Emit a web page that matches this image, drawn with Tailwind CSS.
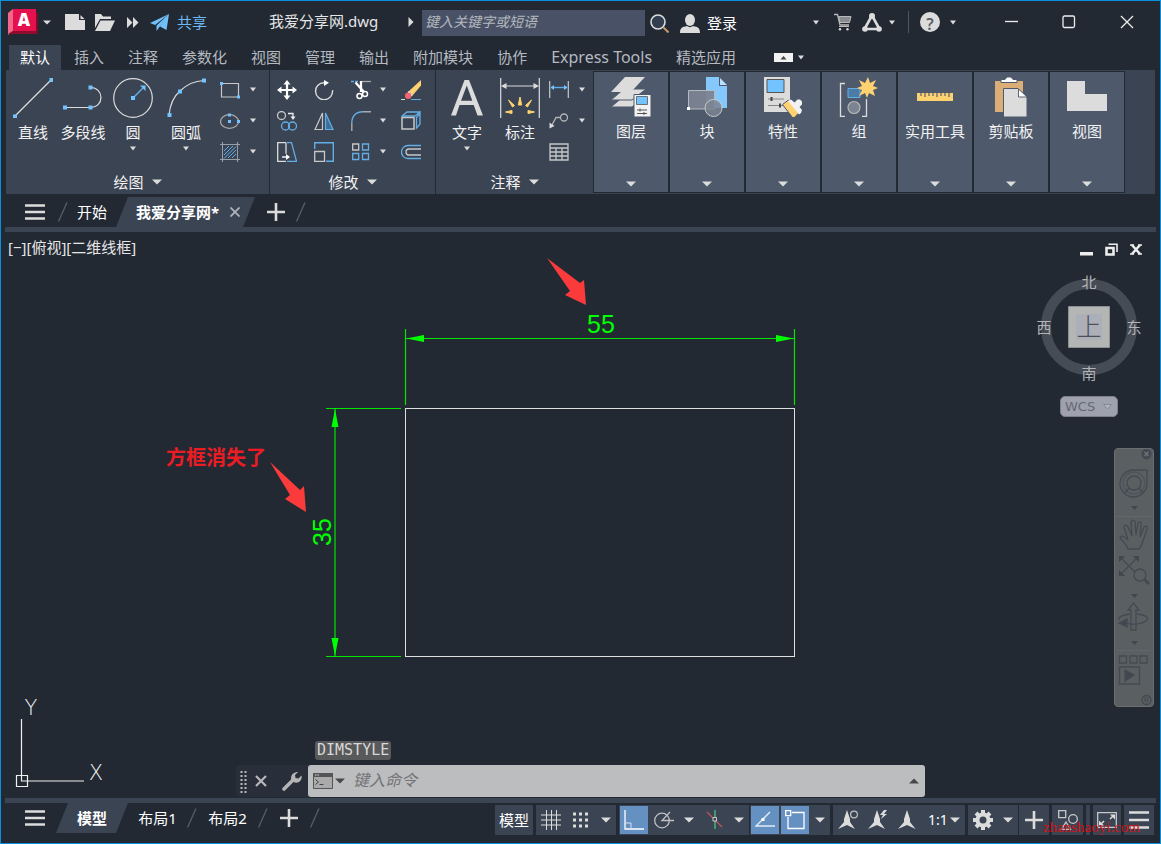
<!DOCTYPE html>
<html lang="zh-CN">
<head>
<meta charset="utf-8">
<meta name="viewport" content="width=device-width, initial-scale=1">
<title>我爱分享网.dwg</title>
<script src="https://cdn.jsdelivr.net/npm/@tailwindcss/browser@4"></script>
</head>
<body class="bg-[#222933]">
<svg class="hidden" aria-hidden="true">
  <symbol id="caret" viewBox="0 0 8 5"><path d="M1 .5h6L4 4.5z" fill="#dcdcdc"/></symbol>
  <symbol id="caret-lg" viewBox="0 0 10 6"><path d="M0 .5h10L5 5.5z" fill="#dcdcdc"/></symbol>
  <symbol id="menu" viewBox="0 0 20 16"><path d="M0 1.5h20M0 8h20M0 14.5h20" stroke="#dcdcdc" stroke-width="2.4"/></symbol>
  <symbol id="plus" viewBox="0 0 18 18"><path d="M9 0v18M0 9h18" stroke="#dcdcdc" stroke-width="2.6"/></symbol>
  <symbol id="slash" viewBox="0 0 10 20"><path d="M.5 19.500L9 .5" stroke="#525c6b" stroke-width="1.400"/></symbol>
</svg>
<div class="flex min-h-screen flex-col overflow-hidden border border-[#0a8fdd] bg-[#222933] text-[15px] leading-5 text-[#e6e6e6]" style="font-family:'Noto Sans','Noto Sans CJK SC',sans-serif">

  <header class="flex h-11 shrink-0 items-center pb-0.5">
    <div class="flex w-[268px] shrink-0 items-center pl-[7px]">
      <button aria-label="应用程序菜单" class="flex items-center gap-[5px]">
        <svg width="30" height="28" viewBox="0 0 30 28"><path d="M0 5L5 1v22L0 27z" fill="#f2688b"/><path d="M5 1h23v22H5z" fill="#e5114e"/><path d="M28 4l2 2v20L28 23z" fill="#7d0a26"/><path d="M5 23h23l2 3H0z" fill="#8e0c2d"/><text x="16" y="18" text-anchor="middle" font-size="17" font-weight="800" fill="#fff" font-family="Open Sans, sans-serif">A</text></svg>
        <svg width="8" height="5"><use href="#caret-lg"/></svg>
      </button>
      <button aria-label="新建" class="ml-[14px]"><svg width="20" height="16" viewBox="0 0 20 16"><path d="M0 0h14v6h6v10H0z" fill="#dcdcdc"/><path d="M15.500 1v4h4z" fill="#dcdcdc"/></svg></button>
      <button aria-label="打开" class="ml-[10px]"><svg width="20" height="17" viewBox="0 0 20 17"><path d="M0 0h6l2 2.500h8V5H5L0 14z" fill="#dcdcdc"/><path d="M5.500 6.500H20L15 17H0z" fill="#dcdcdc"/></svg></button>
      <button aria-label="更多" class="ml-[12px]"><svg width="12" height="11" viewBox="0 0 12 11"><path d="M0 0l5.500 5.500L0 11zM6 0l5.500 5.500L6 11z" fill="#dcdcdc"/></svg></button>
      <button class="ml-[11px] flex items-center gap-2 text-[#6cb8f4]"><svg width="19" height="17" viewBox="0 0 19 17"><path d="M19 0L0 9l5 2zM19 0L6.500 11.500V17l3-4zM19 0L10 12.500l6.500 3.500z" fill="#72c0fb"/></svg>共享</button>
    </div>
    <h1 class="w-[139px] shrink-0 whitespace-nowrap pb-0.5">我爱分享网.dwg</h1>
    <svg width="6" height="10" viewBox="0 0 6 10" class="shrink-0"><path d="M.5 0L5.500 5l-5 5z" fill="#dcdcdc"/></svg>
    <input type="text" aria-label="搜索" placeholder="键入关键字或短语" class="ml-2 mt-0.5 h-[26px] w-[223px] shrink-0 bg-[#485165] px-[3px] pb-1 text-sm italic placeholder:text-[#b4b8bf] outline-none">
    <button aria-label="查找" class="ml-[5px] mt-0.5"><svg width="19" height="19" viewBox="0 0 19 19"><circle cx="8" cy="8" r="7" fill="#42536b" fill-opacity=".5" stroke="#dcdcdc" stroke-width="1.600"/><path d="M13.500 13.500l5 5" stroke="#c49a6c" stroke-width="2"/></svg></button>
    <button class="ml-[11px] mt-0.5 flex items-center gap-[7px] whitespace-nowrap text-white"><svg width="20" height="19" viewBox="0 0 20 19"><ellipse cx="10" cy="6" rx="5" ry="6" fill="#dcdcdc"/><path d="M0 19c0-5 2-6 7-7 2 1.500 4 1.500 6 0 5 1 7 2 7 7z" fill="#dcdcdc"/></svg>登录</button>
    <div class="ml-auto flex shrink-0 items-center">
      <button aria-label="登录选项"><svg width="8" height="5"><use href="#caret"/></svg></button>
      <button aria-label="购物车" class="ml-[14px]"><svg width="18" height="18" viewBox="0 0 18 18"><path d="M0 1.500h3.500L6 12h9" fill="none" stroke="#b9b9b9" stroke-width="1.300"/><path d="M4.500 3.500H17l-1.500 6H6z" fill="#898c91" stroke="#b9b9b9"/><path d="M5 13.500h10" stroke="#b9b9b9"/><circle cx="6" cy="16.300" r="1.200" fill="#dcdcdc"/><circle cx="13.500" cy="16.300" r="1.200" fill="#dcdcdc"/></svg></button>
      <button aria-label="Autodesk App" class="ml-[10px]"><svg width="20" height="19" viewBox="0 0 20 19"><path d="M10 2.500L2.500 16h15z" fill="none" stroke="#dcdcdc" stroke-width="2.600"/><circle cx="10" cy="3" r="3" fill="#dcdcdc"/><circle cx="3" cy="16" r="2.800" fill="#dcdcdc"/><circle cx="17" cy="16" r="2.800" fill="#dcdcdc"/></svg></button>
      <button aria-label="应用选项" class="ml-[6px]"><svg width="8" height="5"><use href="#caret"/></svg></button>
      <span class="ml-[12px] h-[22px] w-px bg-[#4a566b]"></span>
      <button aria-label="帮助" class="ml-[11px] size-5 rounded-full bg-[#dcdcdc] text-base font-semibold text-[#5a5f66]">?</button>
      <button aria-label="帮助选项" class="ml-[9px]"><svg width="8" height="5"><use href="#caret"/></svg></button>
      <button aria-label="最小化" class="ml-[48px]"><svg width="13" height="14"><path d="M0 6.500h13" stroke="#eee" stroke-width="1.300"/></svg></button>
      <button aria-label="最大化" class="ml-[44px]"><svg width="14" height="14"><rect x="1" y="1" width="11.500" height="11.500" rx="1.500" fill="none" stroke="#eee" stroke-width="1.300"/></svg></button>
      <button aria-label="关闭" class="ml-[44px] mr-[26px]"><svg width="14" height="14"><path d="M1 1l12 12M13 1L1 13" stroke="#eee" stroke-width="1.300"/></svg></button>
    </div>
  </header>

  <nav class="flex h-[25px] shrink-0 items-stretch gap-0.5 whitespace-nowrap pl-2 text-[#b5bac1]">
    <button class="bg-[#3b4453] px-[11px] pb-0.5 text-white">默认</button>
    <button class="px-[11px] pb-0.5">插入</button>
    <button class="px-[11px] pb-0.5">注释</button>
    <button class="px-[11px] pb-0.5">参数化</button>
    <button class="px-[11px] pb-0.5">视图</button>
    <button class="px-[11px] pb-0.5">管理</button>
    <button class="px-[11px] pb-0.5">输出</button>
    <button class="px-[11px] pb-0.5">附加模块</button>
    <button class="px-[11px] pb-0.5">协作</button>
    <button class="px-[11px] pb-0.5 text-base leading-5">Express Tools</button>
    <button class="px-[11px] pb-0.5">精选应用</button>
    <button aria-label="最小化功能区" class="ml-[25px]"><svg width="19" height="9" viewBox="0 0 19 9"><path d="M0 0h19v9H0z" fill="#f2f2f2"/><path d="M6.500 6.500h6L9.500 3z" fill="#444"/></svg></button>
    <button aria-label="功能区选项" class="ml-[2px]"><svg width="8" height="5"><use href="#caret"/></svg></button>
  </nav>

  <section aria-label="功能区" class="mx-[5px] flex h-[124px] shrink-0 bg-[#3b4453] text-[#f2f2f2]">
    <div class="flex w-[264px] shrink-0 flex-col justify-between border-r border-[#222933]">
      <div class="flex pt-2">
        <button class="flex w-[54px] flex-col items-center gap-1"><svg width="40" height="40"><path d="M1.500 38.500l37-37" stroke="#dcdcdc" stroke-width="1.200"/><path d="M0 36.500h4v4H0zM36.500 0h4v4h-4z" fill="#72c3ff"/></svg>直线</button>
        <button class="flex w-[46px] flex-col items-center gap-1 whitespace-nowrap"><svg width="40" height="40"><path d="M1 29.500h27a10 10 0 0 0 0-20" fill="none" stroke="#dcdcdc" stroke-width="1.200"/><path d="M0 27.500h4v4H0zM25.500 27.500h4v4h-4zM25.500 7.500h4v4h-4z" fill="#72c3ff"/></svg>多段线</button>
        <button class="flex w-[54px] flex-col items-center gap-1"><svg width="40" height="40"><circle cx="20" cy="20" r="19.300" fill="none" stroke="#dcdcdc" stroke-width="1.200"/><path d="M20 20l10-10" stroke="#64aee6" stroke-width="1.500"/><path d="M18 18h4v4h-4zM27 7.500h5.500V13z" fill="#72c3ff"/></svg>圆<svg width="8" height="5"><use href="#caret"/></svg></button>
        <button class="flex w-[52px] flex-col items-center gap-1"><svg width="40" height="40"><path d="M3 37C4 27 7 19 14 13 20 7 28 3 38 2.500" fill="none" stroke="#dcdcdc" stroke-width="1.200"/><path d="M1.500 35h4v4h-4zM12 11.500h4v4h-4zM36 .5h4v4h-4z" fill="#72c3ff"/></svg>圆弧<svg width="8" height="5"><use href="#caret"/></svg></button>
        <div class="ml-2 grid auto-rows-[31px] grid-cols-[20px_8px] items-center gap-x-[9px] self-start -mt-1">
          <button aria-label="矩形"><svg width="20" height="20"><path d="M1.500 3.500h17v13.500h-17z" fill="none" stroke="#c8c8c8" stroke-width="1.200"/><path d="M0 2h3v3H0zM17 15.500h3v3h-3z" fill="#72c3ff"/></svg></button>
          <button aria-label="矩形选项"><svg width="8" height="5"><use href="#caret"/></svg></button>
          <button aria-label="椭圆"><svg width="20" height="20"><ellipse cx="9.500" cy="10.500" rx="9" ry="6.800" fill="none" stroke="#aaa" stroke-width="1.200"/><path d="M8 9h3v3H8zM8 2.500h3v3H8zM17 9h3v3h-3z" fill="#72c3ff"/></svg></button>
          <button aria-label="椭圆选项"><svg width="8" height="5"><use href="#caret"/></svg></button>
          <button aria-label="图案填充"><svg width="20" height="20"><path d="M2.500 0v20M17.500 0v20M0 2.500h20M0 17.500h20" stroke="#999fa7"/><path d="M4 9l5-5M4 13l9-9M4 16.500L16 4.500M8 16l8-8M12 16l4-4" stroke="#64aee6"/></svg></button>
          <button aria-label="填充选项"><svg width="8" height="5"><use href="#caret"/></svg></button>
        </div>
      </div>
      <button class="flex items-center justify-center gap-2 pb-0.5">绘图<svg width="10" height="6"><use href="#caret-lg"/></svg></button>
    </div>

    <div class="flex w-[166px] shrink-0 flex-col justify-between border-r border-[#222933]">
      <div class="ml-[7px] mt-1 grid auto-rows-[31px] grid-cols-[37px_37px_28px_22px_20px] items-center justify-items-start">
        <button aria-label="移动"><svg width="20" height="20"><path d="M10 2v16M2 10h16" stroke="#fff" stroke-width="2.200"/><path d="M10 0l3.500 4.500h-7zM10 20l3.500-4.500h-7zM0 10l4.500-3.500v7zM20 10l-4.500-3.500v7z" fill="#fff"/></svg></button>
        <button aria-label="旋转"><svg width="20" height="20"><path d="M10 2.700a8.500 8.500 0 1 0 8.500 7.500" fill="none" stroke="#dcdcdc" stroke-width="1.400"/><path d="M10 0l5 2.800L10 6z" fill="#fff"/></svg></button>
        <button aria-label="修剪"><svg width="20" height="20"><path d="M0 1.500h7" stroke="#64aee6" stroke-width="1.300" stroke-dasharray="3 1"/><path d="M11 1.500h9" stroke="#aaa" stroke-width="1.300"/><path d="M4.500 2.500L13 12M10 1v11" stroke="#fff" stroke-width="2.300"/><circle cx="8.500" cy="16" r="2.500" fill="none" stroke="#fff" stroke-width="1.500"/><circle cx="14" cy="14" r="2.500" fill="none" stroke="#fff" stroke-width="1.500"/></svg></button>
        <button aria-label="修剪选项"><svg width="8" height="5"><use href="#caret"/></svg></button>
        <button aria-label="删除"><svg width="20" height="20"><path d="M0 19.500h4" stroke="#dcdcdc"/><path d="M10 19.500h10" stroke="#64aee6"/><path d="M8 11L20 0v5.500L12 15z" fill="#ffd271"/><path d="M6.500 12L8 11l4 4-1.500 1.500z" fill="#fff"/><circle cx="7.200" cy="15.700" r="3.200" fill="#f2666b"/></svg></button>

        <button aria-label="复制"><svg width="20" height="20"><g fill="none" stroke-width="1.300"><circle cx="4.500" cy="4.500" r="4" stroke="#c8c8c8"/><circle cx="8.500" cy="15" r="4" stroke="#64aee6"/><circle cx="15.500" cy="15" r="4" stroke="#64aee6"/><path d="M11 2.500h5V7" stroke="#eee"/></g><path d="M13.500 5.500h5L16 9z" fill="#eee"/></svg></button>
        <button aria-label="镜像"><svg width="20" height="20"><path d="M8.500 2v16.500H1z" fill="none" stroke="#c8c8c8" stroke-width="1.200"/><path d="M11.500 2v16.500H19z" fill="#3c6f9a" stroke="#64aee6" stroke-width="1.200"/></svg></button>
        <button aria-label="圆角"><svg width="20" height="20"><path d="M.8 20v-8M12 .8h8" stroke="#aaa" stroke-width="1.400"/><path d="M.8 12C.8 5 5 .8 12 .8" fill="none" stroke="#64aee6" stroke-width="1.400"/></svg></button>
        <button aria-label="圆角选项"><svg width="8" height="5"><use href="#caret"/></svg></button>
        <button aria-label="分解"><svg width="20" height="20"><path d="M1 6.500h12V18H1z" fill="none" stroke="#c8c8c8" stroke-width="1.500"/><path d="M1 5l5-4h13l-5 4zM15.500 17l3.500-4V2.500l-3.500 4z" fill="none" stroke="#64aee6" stroke-width="1.300"/></svg></button>

        <button aria-label="拉伸"><svg width="20" height="20"><path d="M9 .7H.7v18.600H9M9 .7v11" fill="none" stroke="#dcdcdc" stroke-width="1.300"/><path d="M10 .7h4.500l5 18.600H10" fill="none" stroke="#64aee6" stroke-width="1.300"/><path d="M5 15h5" stroke="#fff" stroke-width="1.400"/><path d="M9 12l4 3-4 3z" fill="#fff"/></svg></button>
        <button aria-label="缩放"><svg width="20" height="20"><path d="M.7 7V.7h18.600v18.600H12" fill="none" stroke="#64aee6" stroke-width="1.400"/><path d="M.7 9.500h9.800v9.800H.7z" fill="none" stroke="#c8c8c8" stroke-width="1.300"/></svg></button>
        <button aria-label="阵列"><svg width="20" height="20" fill="none" stroke-width="1.300"><path d="M1.700 2h6v6h-6z" stroke="#c8c8c8"/><path d="M11.500 2h6v6h-6zM1.700 11.500h6v6h-6zM11.500 11.500h6v6h-6z" stroke="#64aee6"/></svg></button>
        <button aria-label="阵列选项"><svg width="8" height="5"><use href="#caret"/></svg></button>
        <button aria-label="偏移"><svg width="20" height="20" fill="none" stroke-width="1.300"><path d="M20 3.500H7a6.500 6.500 0 0 0 0 13h13" stroke="#64aee6"/><path d="M20 7H8a3 3 0 0 0 0 6h12" stroke="#c8c8c8"/></svg></button>
      </div>
      <button class="flex items-center justify-center gap-2 pb-0.5">修改<svg width="10" height="6"><use href="#caret-lg"/></svg></button>
    </div>

    <div class="flex w-[157px] shrink-0 flex-col justify-between">
      <div class="flex pl-[5px] pt-2">
        <button class="flex w-[52px] flex-col items-center gap-1"><svg width="40" height="40"><path d="M4 37.500L17.500 2h4.500L36 37.500h-5.500L26.700 27H12.500L9 37.500zM14 22.700h11.300L19.800 7.500z" fill="#dcdcdc" fill-rule="evenodd"/></svg>文字<svg width="8" height="5"><use href="#caret"/></svg></button>
        <button class="flex w-[54px] flex-col items-center gap-1"><svg width="40" height="40"><path d="M.7 0v40M39.300 0v40M3 8h34" stroke="#dcdcdc" stroke-width="1.200"/><path d="M1 8l5.500-3v6zM39 8l-5.500-3v6z" fill="#dcdcdc"/><path d="M18.300 27L20 19l1.700 8zM12.500 29L8.500 22l6 5.500zM27.500 29l4-7-6 5.500zM12 35.500l-6.500-1.500 6.500-1.500zM28 35.500l6.500-1.500-6.500-1.500z" fill="#ffd271" stroke="#ffd271"/></svg>标注</button>
        <div class="ml-0.5 grid auto-rows-[31px] grid-cols-[20px_8px] items-center gap-x-[9px] self-start -mt-1">
          <button aria-label="线性标注"><svg width="20" height="20"><path d="M.7 1v17M19.300 1v17" stroke="#c8c8c8" stroke-width="1.200"/><path d="M2 7.500h16" stroke="#64aee6" stroke-width="1.400"/><path d="M1.500 7.500L5 5v5zM18.500 7.500L15 5v5z" fill="#72c3ff"/></svg></button>
          <button aria-label="标注选项"><svg width="8" height="5"><use href="#caret"/></svg></button>
          <button aria-label="引线"><svg width="20" height="20"><circle cx="15" cy="6.500" r="3.500" fill="none" stroke="#b5b5b5" stroke-width="1.300"/><path d="M11.500 6.500H7L3 14" fill="none" stroke="#b5b5b5" stroke-width="1.300"/><path d="M.5 17.500v-6l5 3.500z" fill="#dcdcdc"/></svg></button>
          <button aria-label="引线选项"><svg width="8" height="5"><use href="#caret"/></svg></button>
          <button aria-label="表格"><svg width="20" height="20"><path d="M1 2h18v16H1zM1 6h18M1 10h18M1 14h18M7 6v12M13 6v12" fill="none" stroke="#c8c8c8" stroke-width="1.300"/></svg></button>
        </div>
      </div>
      <button class="flex items-center justify-center gap-2 pb-0.5">注释<svg width="10" height="6"><use href="#caret-lg"/></svg></button>
    </div>

    <div class="flex shrink-0 py-px">
      <button class="flex w-[76px] flex-col items-center border border-[#222933] bg-[#4e5a6c] pt-[5px]"><svg width="40" height="40"><path d="M13 19h22L21 30H0z" fill="#dcdcdc" stroke="#4e5a6c"/><path d="M13 12h22L21 23H0z" fill="#dcdcdc" stroke="#4e5a6c"/><path d="M14 0h20L20 15H0z" fill="#dcdcdc"/><path d="M23 17.500h17V40H23z" fill="#f2f2f2" stroke="#4e5a6c"/><path d="M25.500 19.500h11v8h-11z" fill="#72c3ff" stroke="#555" stroke-width=".8"/><path d="M26 33h10M26 36.500h10M29 31.500v3M33 35v3" stroke="#555"/></svg><span class="mt-1">图层</span><svg width="10" height="6" class="mt-auto mb-[5px]"><use href="#caret-lg"/></svg></button>
      <button class="flex w-[76px] flex-col items-center border border-[#222933] bg-[#4e5a6c] pt-[5px]"><svg width="40" height="40"><path d="M19 0h13v9h8v22H19z" fill="#85c8fc"/><path d="M33 1l7 7h-7z" fill="#b9dffc"/><path d="M1.500 13.500h26V32h-26z" fill="#7b8492" fill-opacity=".95" stroke="#b5bac2"/><circle cx="26.500" cy="31" r="8.500" fill="#7b8492" fill-opacity=".85" stroke="#c8c8c8"/><path d="M0 30h3v3H0z" fill="#fff"/></svg><span class="mt-1">块</span><svg width="10" height="6" class="mt-auto mb-[5px]"><use href="#caret-lg"/></svg></button>
      <button class="flex w-[76px] flex-col items-center border border-[#222933] bg-[#4e5a6c] pt-[5px]"><svg width="40" height="40"><path d="M1 0h26v35H1z" fill="#dcdcdc"/><path d="M4 2.500h17v13H4z" fill="#72c3ff" stroke="#555"/><path d="M5 22h16M5 28.500h16" stroke="#888"/><path d="M8.500 20v4M17 26.500v4" stroke="#444" stroke-width="2"/><path d="M19.500 27.500l6-4.500 11 12-5 5.500h-2z" fill="#ffd271" stroke="#4e5a6c"/><path d="M25 24l3-1.500 3.500 3 3-3h2.500l2 2v3l-2.500 2.500 2.500 3-1 3-2 1.500z" fill="#f2f2f2"/></svg><span class="mt-1">特性</span><svg width="10" height="6" class="mt-auto mb-[5px]"><use href="#caret-lg"/></svg></button>
      <button class="flex w-[76px] flex-col items-center border border-[#222933] bg-[#4e5a6c] pt-[5px]"><svg width="40" height="40"><path d="M6 6.500H1.500v33H6M23 39.500h4.500V22" fill="none" stroke="#dcdcdc" stroke-width="1.300"/><path d="M9 11.500h12v9H9z" fill="#4c7ba5" stroke="#64aee6"/><circle cx="15" cy="30.500" r="6" fill="#7b8492" stroke="#b5b5b5" stroke-width="1.200"/><path d="M29 0l2 6 6-3-3 6 5 2-5 2 2 6-6-3-2 5-2-5-6 3 3-6-5-2 5-2-3-6 6 3z" fill="#ffd271"/></svg><span class="mt-1">组</span><svg width="10" height="6" class="mt-auto mb-[5px]"><use href="#caret-lg"/></svg></button>
      <button class="flex w-[76px] flex-col items-center border border-[#222933] bg-[#4e5a6c] pt-[5px]"><svg width="40" height="40"><path d="M2 16h36v8H2z" fill="#ffd271"/><path d="M6 16v3M10 16v4M14 16v3M18 16v3M22 16v4M26 16v3M30 16v3M34 16v4" stroke="#59606a" stroke-width="1.200"/></svg><span class="mt-1 whitespace-nowrap">实用工具</span><svg width="10" height="6" class="mt-auto mb-[5px]"><use href="#caret-lg"/></svg></button>
      <button class="flex w-[76px] flex-col items-center border border-[#222933] bg-[#4e5a6c] pt-[5px]"><svg width="40" height="40"><path d="M4 4h28v31H4z" fill="#dbae78"/><path d="M10 5.500h16V2.500h-4L20 0h-4l-2 2.500h-4z" fill="#fff" stroke="#4e5a6c"/><path d="M12.500 11.500H27l9 9V40H12.500z" fill="#dcdcdc" stroke="#4e5a6c"/><path d="M27.500 12v8H36z" fill="#fff" stroke="#5d6673"/></svg><span class="mt-1">剪贴板</span><svg width="10" height="6" class="mt-auto mb-[5px]"><use href="#caret-lg"/></svg></button>
      <button class="flex w-[76px] flex-col items-center border border-[#222933] bg-[#4e5a6c] pt-[5px]"><svg width="40" height="40"><path d="M0 4h18v13h22v17H0z" fill="#dcdcdc"/></svg><span class="mt-1">视图</span><svg width="10" height="6" class="mt-auto mb-[5px]"><use href="#caret-lg"/></svg></button>
    </div>
  </section>

  <nav aria-label="文件" class="mx-1 flex h-[38px] shrink-0 items-center border-b-[5px] border-[#3b4453] pl-5 pt-[3px] text-white">
    <button aria-label="文件菜单"><svg width="20" height="16"><use href="#menu"/></svg></button>
    <svg width="10" height="20" class="ml-[13px]"><use href="#slash"/></svg>
    <button class="ml-[9px]">开始</button>
    <div class="ml-[9px] flex h-full w-[139px] items-center bg-[#3b4453] pl-5 [clip-path:polygon(12px_0,100%_0,127px_100%,0_100%)]">
      <button class="whitespace-nowrap font-bold">我爱分享网*</button>
      <button aria-label="关闭文件" class="ml-[11px]"><svg width="10" height="10"><path d="M.5.5l9 9M9.500.5l-9 9" stroke="#b0b4ba" stroke-width="1.800"/></svg></button>
    </div>
    <button aria-label="新图形" class="ml-3"><svg width="18" height="18"><use href="#plus"/></svg></button>
    <svg width="10" height="20" class="ml-[11px]"><use href="#slash"/></svg>
  </nav>

  <main class="relative flex-1">
    <div class="pl-[7px] pt-[5px]">[−][俯视][二维线框]</div>

    <svg class="absolute left-[159px] top-5" width="660" height="420" viewBox="160 252 660 420" role="img" aria-label="矩形标注图">
      <rect x="405.500" y="408.500" width="389" height="248" fill="none" stroke="#dedede"/>
      <g stroke="#00e600" stroke-width="1.200"><path d="M405.500 329v76M794.500 329v76M406 338.500h388M326 408.500h75M326 656.500h75M335 409v247"/></g>
      <path d="M406 338.500l18-3.500v7zM794 338.500l-18-3.500v7zM335 409l-3.500 18h7zM335 656l-3.500-18h7z" fill="#0f0"/>
      <g fill="#0f0" font-family="Liberation Sans, sans-serif" font-size="25" text-anchor="middle"><text x="601" y="333">55</text><text transform="translate(331 532) rotate(-90)">35</text></g>
      <path d="M547 258l33 25 4-3 2 25-21-10 5-4z" fill="#fb3b3b"/>
      <path d="M270 462l30 28 4-4 2 26-21-13 5-4z" fill="#fb3b3b"/>
      <text x="166" y="465" font-size="20" font-weight="700" fill="#ec1c24">方框消失了</text>
    </svg>

    <div class="absolute right-[18px] top-[11px] flex items-center gap-3">
      <button aria-label="最小化视口"><svg width="13" height="12"><path d="M0 8h13v3.500H0z" fill="#eee"/></svg></button>
      <button aria-label="还原视口"><svg width="13" height="13"><path d="M3.500 1.200h8.500V9" fill="none" stroke="#eee" stroke-width="1.600"/><path d="M1.500 5h7v6.500h-7z" fill="none" stroke="#eee" stroke-width="2.600"/></svg></button>
      <button aria-label="关闭视口"><svg width="12" height="11"><path d="M0 1h4M8 1h4M0 10h4M8 10h4" stroke="#eee" stroke-width="1.500"/><path d="M2 1l8 9M10 1l-8 9" stroke="#eee" stroke-width="2.500"/></svg></button>
    </div>

    <div class="absolute right-4 top-10 flex flex-col items-center">
      <svg width="110" height="112" viewBox="1034 272 110 112" role="img" aria-label="ViewCube">
        <circle cx="1089" cy="327" r="43" fill="none" stroke="#454c55" stroke-width="10"/>
        <path d="M1068.500 306.500h41v41h-41z" fill="#b4b5b5" stroke="#8d9091"/>
        <path d="M1076 314h26v26h-26z" fill="#acafb8"/>
        <g text-anchor="middle" font-size="15" fill="#b2b4b6"><text x="1089" y="288">北</text><text x="1089" y="379">南</text><text x="1044" y="333">西</text><text x="1134" y="333">东</text></g>
        <text x="1089" y="336" text-anchor="middle" font-size="25" font-weight="300" fill="#4c4f54">上</text>
      </svg>
      <button class="mt-3 flex h-[21px] w-[58px] items-center gap-2 rounded-[5px] border border-[#7d808c] bg-[#9fa1af] pl-1 text-[13px] text-[#65686f]" style="font-family:'DejaVu Sans',sans-serif">WCS<svg width="9" height="6"><path d="M.5.5h8l-4 4.500z" fill="#b3b5c0" stroke="#858894"/></svg></button>
    </div>

    <div role="toolbar" aria-label="导航栏" class="absolute right-1.5 top-[216px] flex w-10 flex-col rounded border border-[#6a6e71] bg-[#5a5f62]">
      <svg width="38" height="257" viewBox="1115 449 38 257" fill="none" stroke="#454a52" stroke-width="1.300">
        <circle cx="1146.500" cy="454" r="4.500" fill="#454a50"/><path d="M1144.500 452l4 4M1148.500 452l-4 4" stroke="#70757a"/>
        <path d="M1134 470h13v13a13.500 13.500 0 1 1-13-13z"/><circle cx="1134" cy="483" r="7"/><path d="M1129 488l-4 5M1139 488l4 5"/><circle cx="1134" cy="483" r="11" stroke-opacity=".5"/>
        <path d="M1131 506h7l-3.500 4zM1131 594h7l-3.500 4zM1131 641h7l-3.500 4z" fill="#42474f" stroke="none"/>
        <path d="M1116 516.500h36M1116 650.500h36" stroke="#63676b" stroke-width="1"/>
        <path d="M1128 549c-2-5-5-8-8-11 1-3 4-2 8 2l-4-13c1-3 3-2 4 0l4 9-1-14c1-3 4-2 4 0l1 13 2-12c2-2 4-1 3 1l-1 13 4-10c2-2 4 0 3 2l-4 12c-1 4-2 6-4 8z"/>
        <path d="M1120 557l18 18M1138 557l-19 19"/><path d="M1119 556h6l-6 6zM1139 556h-6l6 6zM1119 576h6l-6-6z" fill="#42474f" stroke="none"/><circle cx="1140" cy="575" r="6" fill="#5a5f62"/><path d="M1144 579l5 5" stroke-width="3"/>
        <path d="M1131 630v-20h-3l5.500-7 5.500 7h-3v20z"/><path d="M1137 614c9 1 13 4 9 7-5 3-13 4-20 2M1130 614c-8 1-12 3-11 6"/><path d="M1119 623l8-4v8z" fill="#42474f"/>
        <path d="M1119.500 656h7v7h-7zM1130 656h7v7h-7zM1140 656h7v7h-7zM1119.500 667h20v17h-20z"/><path d="M1125 670l9 5-9 6z" fill="#42474f"/>
        <circle cx="1146.500" cy="700" r="4.500"/><path d="M1144 700h5l-2.500 2.500zM1144 698h5" stroke-width="1"/>
      </svg>
    </div>

    <svg class="absolute bottom-2 left-2.5" width="100" height="96" viewBox="11 694 100 96" fill="none" stroke="#f0f0f0" stroke-width="1.200" role="img" aria-label="坐标系">
      <path d="M21.500 719v62H84M16.500 775.500h11v11h-11z"/>
      <g fill="#f0f0f0" stroke="none" font-size="21" font-weight="200" text-anchor="middle" font-family="DejaVu Sans, sans-serif"><text x="31" y="715">Y</text><text x="96" y="780">X</text></g>
    </svg>

    <div class="absolute bottom-0 left-[235px] w-[689px]">
      <div class="ml-[79px] w-fit rounded-[3px] bg-[#58595b] px-[2px] text-[15px] leading-[19px] text-[#d8d8d8]" style="font-family:'DejaVu Sans Mono',monospace">DIMSTYLE</div>
      <div class="mt-[5px] mb-px flex h-8 items-center rounded bg-[#292e3b]">
        <svg width="7" height="23" class="ml-1"><path d="M1.500 1v22M5.500 1v22" stroke="#b8b8b8" stroke-width="2" stroke-dasharray="2 2"/></svg>
        <button aria-label="关闭命令行" class="ml-[8px]"><svg width="12" height="12"><path d="M1 1l10 10M11 1L1 11" stroke="#b8b8b8" stroke-width="2.200"/></svg></button>
        <button aria-label="自定义" class="ml-[15px]"><svg width="20" height="20"><path d="M2 18l9-9" stroke="#b5b5b5" stroke-width="3.600" stroke-linecap="round"/><path d="M9 8c0-5 3-7 7-7l-3 3 .500 3 3 .500 3-3c1 4-2 8-7 7z" fill="#b5b5b5"/></svg></button>
        <div class="ml-1.5 flex h-8 flex-1 items-center rounded-[3px] bg-[#bcbdbf] pl-[5px] pr-[6px]">
          <button aria-label="最近命令" class="flex items-center gap-0.5"><svg width="20" height="16"><path d="M.5.5h19v15H.5z" fill="#aaa" stroke="#555"/><path d="M0 0h20v4H0z" fill="#555"/><path d="M2 2h1.500M4.500 2H6" stroke="#ddd"/><path d="M2.500 6.500L5.500 9l-3 2.500M6.500 11.500h4" fill="none" stroke="#444"/></svg><svg width="10" height="6"><path d="M0 .5h10L5 5.500z" fill="#484848"/></svg></button>
          <input type="text" aria-label="命令" placeholder="键入命令" class="ml-2 min-w-0 flex-1 bg-transparent pb-0.5 text-base italic text-[#444] outline-none placeholder:text-[#737477]">
          <button aria-label="命令历史"><svg width="10" height="6"><path d="M0 5.500h10L5 .5z" fill="#484848"/></svg></button>
        </div>
      </div>
    </div>
  </main>

  <footer class="relative mx-1 flex h-[45px] shrink-0 border-t-[5px] border-[#3b4453] pl-5 text-white">
    <nav aria-label="布局" class="flex h-[30px] items-center whitespace-nowrap">
      <button aria-label="布局菜单"><svg width="20" height="16"><use href="#menu"/></svg></button>
      <button class="ml-[11px] h-full w-[72px] bg-[#3b4453] font-bold [clip-path:polygon(12px_0,100%_0,60px_100%,0_100%)]">模型</button>
      <button class="ml-[10px] w-[39px]">布局1</button>
      <svg width="10" height="20" class="ml-[10px]"><use href="#slash"/></svg>
      <button class="ml-[11px] w-[39px]">布局2</button>
      <svg width="10" height="20" class="ml-[11px]"><use href="#slash"/></svg>
      <button aria-label="新布局" class="ml-3"><svg width="18" height="18"><use href="#plus"/></svg></button>
      <svg width="10" height="20" class="ml-3"><use href="#slash"/></svg>
    </nav>
    <div role="toolbar" aria-label="状态栏" class="ml-auto mr-0.5 mt-0.5 flex h-[30px] shrink-0 gap-[3px]">
      <button class="w-[38px] bg-[#3b4453]">模型</button>
      <div class="flex w-20 items-center bg-[#3b4453] pl-[5px]">
        <button aria-label="栅格"><svg width="20" height="20"><path d="M5.500 0v20M10.500 0v20M15.500 0v20M0 5h20M0 10h20M0 15h20" stroke="#dcdcdc"/></svg></button>
        <button aria-label="捕捉" class="ml-3"><svg width="16" height="16"><path d="M0 2h16M0 8h16M0 14h16" stroke="#dcdcdc" stroke-width="3" stroke-dasharray="3 3"/></svg></button>
        <button aria-label="捕捉选项" class="ml-3"><svg width="10" height="6"><use href="#caret-lg"/></svg></button>
      </div>
      <div class="flex gap-px">
        <div class="flex w-[130px] items-center bg-[#3b4453] pl-px">
          <button aria-label="正交" class="grid size-7 place-items-center bg-[#6490c2]"><svg width="20" height="20"><path d="M1 0v19h19" fill="none" stroke="#fff" stroke-width="1.300"/><path d="M1 13h6v6" fill="none" stroke="#d5e3f2"/></svg></button>
          <button aria-label="极轴" class="ml-1.5"><svg width="20" height="20"><circle cx="8" cy="10.500" r="7.300" fill="none" stroke="#c0c0c0" stroke-width="1.300"/><path d="M16 2L8 10.500h12" fill="none" stroke="#c0c0c0" stroke-width="1.300"/></svg></button>
          <button aria-label="极轴选项" class="ml-[10px]"><svg width="10" height="6"><use href="#caret-lg"/></svg></button>
          <button aria-label="等轴测" class="ml-3"><svg width="18" height="20"><path d="M1 2l15 15" stroke="#b85563" stroke-width="1.300"/><path d="M9 0v19" stroke="#4fb977" stroke-width="1.400"/><path d="M7 7.500h3.500V11H7z" fill="#3b4453" stroke="#ccc"/></svg></button>
          <button aria-label="等轴测选项" class="ml-[10px]"><svg width="10" height="6"><use href="#caret-lg"/></svg></button>
        </div>
        <div class="flex w-20 items-center bg-[#3b4453] pl-px">
          <button aria-label="对象捕捉追踪" class="grid size-7 place-items-center bg-[#6490c2]"><svg width="20" height="20"><path d="M15 2L1 16h19" fill="none" stroke="#e0eaf5" stroke-width="1.500"/><path d="M6.500 8h3v3h-3z" fill="#fff"/></svg></button>
          <button aria-label="对象捕捉" class="ml-0.5 grid size-7 place-items-center bg-[#6490c2]"><svg width="20" height="20"><path d="M7 2.500h12v16H3V7" fill="none" stroke="#fff" stroke-width="1.300"/><path d="M.7.7h5v5h-5z" fill="none" stroke="#fff" stroke-width="1.300"/></svg></button>
          <button aria-label="捕捉设置" class="ml-1.5"><svg width="10" height="6"><use href="#caret-lg"/></svg></button>
        </div>
      </div>
      <div class="flex w-[132px] items-center whitespace-nowrap bg-[#3b4453] pl-[5px]">
        <button aria-label="注释可见性"><svg width="20" height="20"><path d="M9 0l3 9v3l5 7-8-4-9 4 6-7V9z" fill="#dcdcdc"/><circle cx="16" cy="4.500" r="3.400" fill="#3b4453" stroke="#c0c0c0" stroke-width="1.200"/></svg></button>
        <button aria-label="自动缩放" class="ml-[10px]"><svg width="20" height="20"><path d="M9 0l3 9v3l5 7-8-4-9 4 6-7V9z" fill="#dcdcdc"/><path d="M16 0l-4 5h3l-2 4 6-5h-3l3-4z" fill="#dcdcdc"/></svg></button>
        <button aria-label="注释比例" class="ml-[10px]"><svg width="20" height="20"><path d="M9 0l3 9v3l5.500 7L9 15l-9 4 6-7V9z" fill="#dcdcdc"/></svg></button>
        <button class="ml-[10px] flex items-center gap-0.5 text-[14px]"><span class="w-5">1:1</span><svg width="10" height="6"><use href="#caret-lg"/></svg></button>
      </div>
      <div class="flex gap-px">
        <div class="flex w-[50px] items-center bg-[#3b4453] pl-[5px]">
          <button aria-label="工作空间"><svg width="20" height="20"><circle cx="10" cy="10" r="5.500" fill="none" stroke="#dcdcdc" stroke-width="4"/><path d="M10 0v4M10 16v4M0 10h4M16 10h4M3 3l3 3M14 14l3 3M17 3l-3 3M6 14l-3 3" stroke="#dcdcdc" stroke-width="4"/></svg></button>
          <button aria-label="工作空间选项" class="ml-[10px]"><svg width="10" height="6"><use href="#caret-lg"/></svg></button>
        </div>
        <button aria-label="添加" class="grid w-[30px] place-items-center bg-[#3b4453]"><svg width="18" height="18"><use href="#plus"/></svg></button>
      </div>
      <button aria-label="隔离对象" class="grid w-[31px] place-items-center bg-[#3b4453]"><svg width="20" height="20" fill="none" stroke="#c8c8c8" stroke-width="1.300"><path d="M.7.7h7v7h-7z"/><circle cx="15" cy="9" r="4.300"/><path d="M8 12l4.500 7.300h-9z"/></svg></button>
      <span class="w-1 bg-[#3b4453]"></span>
      <button aria-label="全屏" class="grid w-7 place-items-center bg-[#3b4453]"><svg width="20" height="16"><path d="M.7.7h18.600v14.600H.7z" fill="none" stroke="#c8c8c8" stroke-width="1.300"/><path d="M13 2.500h5v5zM2 8.500v5h5z" fill="#dcdcdc"/><path d="M13 7l3-3M4 12l3-3" stroke="#dcdcdc" stroke-width="1.500"/></svg></button>
      <button aria-label="自定义状态栏" class="grid w-[30px] place-items-center bg-[#3b4453]"><svg width="20" height="18" viewBox="0 0 20 18"><path d="M0 1.500h20M0 9h20M0 16.500h20" stroke="#dcdcdc" stroke-width="2.400"/></svg></button>
    </div>
    <span class="absolute bottom-2 right-4 text-[15px] leading-4 text-[#d01218]" style="font-family:'Liberation Serif',serif">zhanshaoyi.com</span>
  </footer>
</div>
</body>
</html>
